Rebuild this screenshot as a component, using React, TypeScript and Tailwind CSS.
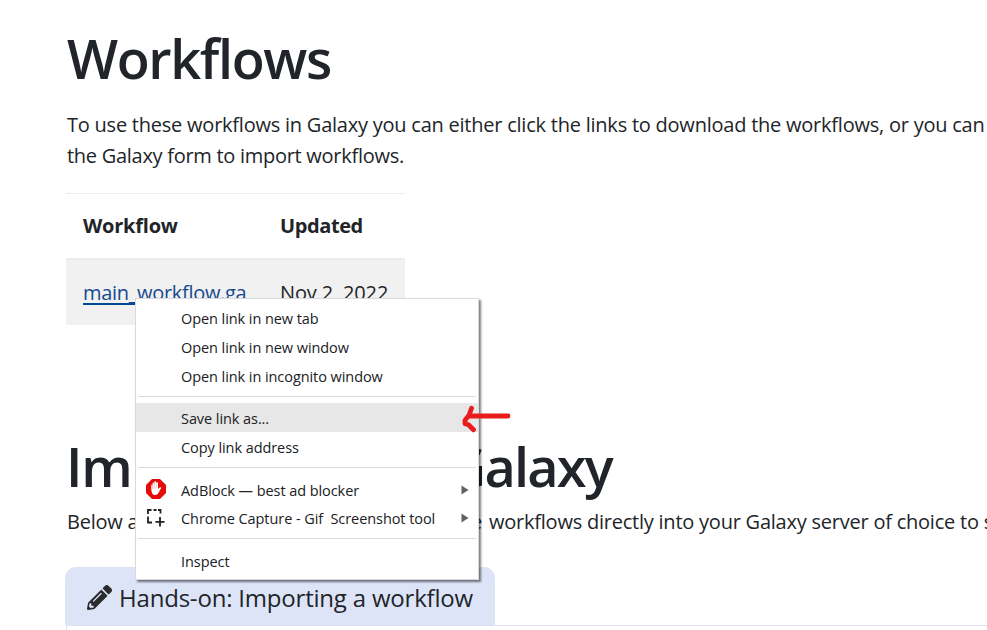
import type { ReactNode } from "react";

function Item({ children, icon, arrow, active }: { children: ReactNode; icon?: ReactNode; arrow?: boolean; active?: boolean }) {
  return (
    <div className={`flex h-[29px] items-center ${active ? "bg-[#e7e7e7]" : ""}`}>
      <div className="w-[45px] shrink-0 pl-[9px]">{icon}</div>
      <span className="whitespace-pre pt-[2px] text-[14.5px] leading-[20px] tracking-[-0.07px] text-[#202124]">{children}</span>
      {arrow && (
        <svg className="mr-[9px] ml-auto" width="8" height="10" viewBox="0 0 8 10">
          <path d="M0.5 0.5 7.5 5 0.5 9.5Z" fill="#606163" />
        </svg>
      )}
    </div>
  );
}

function AdBlockIcon() {
  return (
    <svg width="22" height="22" viewBox="0 0 22 22">
      <path d="M7 1h8l6 6v8l-6 6H7l-6-6V7z" fill="#e50b0b" />
      <path d="M6.300 11V7q.6-.8 1.300 0V5q.8-1 1.700 0V3.800q1-.9 1.900 0V4.700q1-.9 1.800 0v6.300l1.600-1.500q1-.6 1.700.2l-2.900 5.300q-1 2-3.100 2H9.500Q6.300 16.500 6.300 11Z" fill="#fff" />
      <path d="M7.600 7v4M9.300 5v5.500M11.200 5v5.500" stroke="#f39a9a" strokeWidth=".6" />
    </svg>
  );
}

function CaptureIcon() {
  return (
    <svg width="22" height="22" viewBox="0 0 22 22" fill="none" stroke="#202124" strokeWidth="1.8">
      <path d="M3 7V3h3.500M8.500 3h3M13 3h2.500v3.500M3 9.500V15.500h4M15 10v9.500M10.500 14.800h9" />
    </svg>
  );
}

function ContextMenu() {
  return (
    <div className="absolute left-[135px] top-[298px] h-[282px] w-[344px] border border-[#d9dadc] bg-white pt-[4px] shadow-[2px_2px_2px_rgba(0,0,0,0.5)]">
      <Item>Open link in new tab</Item>
      <Item>Open link in new window</Item>
      <Item>Open link in incognito window</Item>
      <div className="mx-0.5 my-[6px] h-px bg-[#d9dadc]" />
      <Item active>Save link as...</Item>
      <Item>Copy link address</Item>
      <div className="mx-0.5 mt-[6px] mb-[7px] h-px bg-[#d9dadc]" />
      <div className="-mb-px">
        <Item icon={<div className="-mt-[2px]"><AdBlockIcon /></div>} arrow>AdBlock — best ad blocker</Item>
      </div>
      <Item icon={<CaptureIcon />} arrow>{"Chrome Capture - Gif  Screenshot tool"}</Item>
      <div className="mx-0.5 mt-[6px] mb-[7px] h-px bg-[#d9dadc]" />
      <Item>Inspect</Item>
    </div>
  );
}

export default function App() {
  return (
    <main className="relative h-[630px] w-[987px] overflow-hidden bg-white pl-[66px] font-['Open_Sans','Noto_Sans',sans-serif] text-[20px] tracking-[-0.23px] text-[#212529]">
      <h1 className="h-[109px] pt-[25px] pl-px text-[54px] leading-[67px] font-semibold tracking-[-1.35px] whitespace-nowrap">Workflows</h1>
      <div className="h-[84px] pl-px leading-[31px] whitespace-nowrap">
        <p>To use these workflows in Galaxy you can either click the links to download the workflows, or you can</p>
        <p className="tracking-[-0.28px]">the Galaxy form to import workflows.</p>
      </div>
      <div className="w-[339px] border-t border-[#ececec]">
        <div className="flex h-[64px] items-center font-bold">
          <span className="w-[214px] pl-[17px]">Workflow</span>
          <span className="tracking-[-0.4px]">Updated</span>
        </div>
        <div className="flex h-[67px] items-center border-t-2 border-[#ececec] bg-[#f1f1f1]">
          <span className="w-[214px] pl-[17px]">
            <a className="inline-block border-b-2 border-[#004a94] leading-[21px] tracking-[-0.32px] text-[#174a8f]">main_workflow.ga</a>
          </span>
          <span className="tracking-[-0.15px]">Nov 2, 2022</span>
        </div>
      </div>
      <h1 className="mt-[108px] flex h-[73px] text-[54px] leading-[67px] font-semibold whitespace-nowrap">
        <span className="w-[381px] shrink-0 tracking-[-1.2px]">Importing into</span>
        <span className="tracking-[-1.8px]">Galaxy</span>
      </h1>
      <div className="flex h-[61px] pl-px leading-[31px] whitespace-nowrap">
        <span className="mr-[7px] flex w-[415px] shrink-0 justify-between">
          <span>Below are the steps to import</span>
          <span>these</span>
        </span>
        <span>workflows directly into your Galaxy server of choice to start</span>
      </div>
      <div className="-ml-px flex h-[58px] w-[430px] items-center rounded-t-[11px] bg-[#dee4f8] pl-[22px] text-[24px] tracking-[-0.2px]">
        <svg className="mt-[3px]" width="25" height="25" viewBox="0 0 512 512" fill="#292b2c">
          <path d="M498 142l-46 46c-5 5-13 5-17 0L324 77c-5-5-5-12 0-17l46-46c19-19 49-19 68 0l60 60c19 19 19 49 0 68zm-214-42L22 362 0 484c-3 16 12 30 28 28l122-22 262-262c5-5 5-13 0-17L301 100c-4-5-12-5-17 0zM124 340c-5-6-5-14 0-20l154-154c6-5 14-5 20 0s5 14 0 20L144 340c-6 5-14 5-20 0zm-36 84h48v36l-64 12-32-31 12-65h36v48z" />
        </svg>
        <span className="ml-[7px] pt-[3px] whitespace-nowrap">Hands-on: Importing a workflow</span>
      </div>
      <div className="h-10 border-t border-l border-[#dee2f2]" />
      <ContextMenu />
      <svg className="absolute left-[460px] top-[403px]" width="54" height="30" fill="none" stroke="#e91b1d" strokeWidth="4.800" strokeLinecap="round" strokeLinejoin="round">
        <path d="M48 13H10" />
        <path d="M11.500 6L9 13 5 18v3.500l3.500 1 5 5" transform="translate(0 -.8)" />
      </svg>
    </main>
  );
}
